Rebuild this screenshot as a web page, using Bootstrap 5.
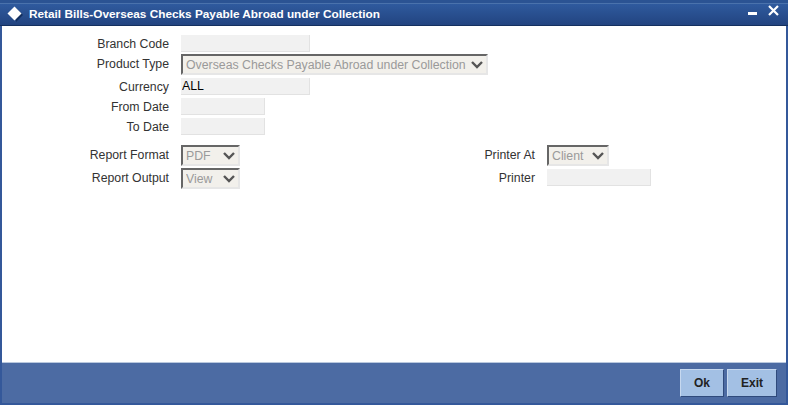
<!DOCTYPE html>
<html lang="en">
<head>
    <meta charset="UTF-8">
    <meta name="viewport" content="width=device-width, initial-scale=1.0">
    <title>Retail Bills</title>
    <link href="https://cdn.jsdelivr.net/npm/bootstrap@5.3.0/dist/css/bootstrap.min.css" rel="stylesheet">
    <style>
        html, body { height: 100%; }
        body { font-family: "Liberation Sans", Arial, sans-serif; font-size: 12.3px; color: #333; background: #fff; overflow: hidden; }
        .win-shell { width: 788px; height: 405px; background: #34589a; }
        .win-title { height: 26px; padding-top: 3px; background: #2b5393; }
        .win-title-in { height: 23px; border-top: 1px solid #4a72ac; border-bottom: 1px solid #14305f; background: linear-gradient(#2f5a9e, #224480); color: #fff; font-weight: 700; font-size: 11.8px; padding-left: 7px; }
        .win-body { height: 336px; margin: 0 2px; background: #fff; padding-top: 9px; }
        .win-foot { height: 41px; background: #4c6ba3; border-top: 1px solid #b9c8de; padding: 6px 9px 0 0; margin-left: 2px; margin-right: 2px; }
        .field-row { display: flex; align-items: center; }
        .field-label { width: 167px; text-align: right; flex: none; line-height: 14px; }
        .field-label-up { margin-bottom: 2px; }
        .field-label-2 { width: 295px; }
        .field-gap { margin-left: 12px; }
        .push-2 { margin-top: 2px; }
        .push-3 { margin-top: 3px; }
        .push-10 { margin-top: 10px; }
        .txt-box { height: 17px; border: 0; border-bottom: 1px solid #e2e2e2; border-right: 1px solid #e2e2e2; background: #f1f1f1; font: 12.3px "Liberation Sans", Arial, sans-serif; color: #000; padding: 0 1px; display: block; }
        .txt-box-up { margin-bottom: 2px; }
        .w-129 { width: 129px; }
        .w-84 { width: 84px; }
        .w-104 { width: 104px; }
        .sel-box { height: 21px; appearance: none; border-style: solid; border-width: 2px; border-color: #666 #e6e6e6 #e6e6e6 #666; background: #f2f0eb url("data:image/svg+xml,%3Csvg xmlns='http://www.w3.org/2000/svg' width='12' height='8'%3E%3Cpath d='M1 1l5 5 5-5' fill='none' stroke='%23555' stroke-width='2.400'/%3E%3C/svg%3E") no-repeat right 3px center; font: 12.3px "Liberation Sans", Arial, sans-serif; color: #9a9a9a; padding: 0 0 0 3px; display: block; opacity: 1; }
        .w-307 { width: 307px; }
        .w-59 { width: 59px; }
        .w-62 { width: 62px; }
        .foot-btn { width: 44px; height: 28px; background: #a3c0e4; border: 1px solid; border-color: #c6d8ef #2f4a7c #2f4a7c #c6d8ef; font-family: "Liberation Sans", Arial, sans-serif; font-size: 12px; font-weight: 700; color: #222; padding: 0; border-radius: 0; }
        .foot-btn-wide { width: 50px; }
        .foot-gap { gap: 3px; }
        .title-icon { margin: -2px 6px 0 0; flex: none; }
    </style>
</head>
<body>
<div class="win-shell">
    <!-- Title bar -->
    <div class="win-title">
        <div class="win-title-in d-flex align-items-center">
            <svg width="16" height="16" viewBox="0 0 16 16" class="title-icon">
                <path d="M9 2l7 7-7 7z" fill="#14305f"/>
                <path d="M7.500 0.500l7 7-7 7-7-7z" fill="#fff"/>
            </svg>
            <span class="flex-grow-1">Retail Bills-Overseas Checks Payable Abroad under Collection</span>
            <svg width="44" height="21" viewBox="0 0 44 21">
                <path d="M4 8h9v3H4z" fill="#fff"/>
                <path d="M25 2l9 9M34 2l-9 9" stroke="#fff" stroke-width="2.200" fill="none"/>
            </svg>
        </div>
    </div>

    <!-- Form -->
    <div class="win-body">
        <div class="field-row"><div class="field-label">Branch Code</div><input class="txt-box w-129 field-gap" disabled></div>
        <div class="field-row push-2"><div class="field-label field-label-up">Product Type</div>
            <select class="sel-box w-307 field-gap" disabled><option>Overseas Checks Payable Abroad under Collection</option></select></div>
        <div class="field-row push-3"><div class="field-label">Currency</div><input class="txt-box w-129 field-gap" value="ALL" disabled></div>
        <div class="field-row push-3"><div class="field-label">From Date</div><input class="txt-box w-84 field-gap" disabled></div>
        <div class="field-row push-3"><div class="field-label">To Date</div><input class="txt-box w-84 field-gap" disabled></div>
        <div class="field-row push-10">
            <div class="field-label field-label-up">Report Format</div>
            <select class="sel-box w-59 field-gap" disabled><option>PDF</option></select>
            <div class="field-label field-label-up field-label-2">Printer At</div>
            <select class="sel-box w-62 field-gap" disabled><option>Client</option></select>
        </div>
        <div class="field-row push-2">
            <div class="field-label field-label-up">Report Output</div>
            <select class="sel-box w-59 field-gap" disabled><option>View</option></select>
            <div class="field-label field-label-up field-label-2">Printer</div>
            <input class="txt-box txt-box-up w-104 field-gap" disabled>
        </div>
    </div>

    <!-- Buttons -->
    <div class="win-foot d-flex justify-content-end foot-gap">
        <button class="foot-btn">Ok</button>
        <button class="foot-btn foot-btn-wide">Exit</button>
    </div>
</div>
<script src="https://cdn.jsdelivr.net/npm/bootstrap@5.3.0/dist/js/bootstrap.bundle.min.js"></script>
</body>
</html>
